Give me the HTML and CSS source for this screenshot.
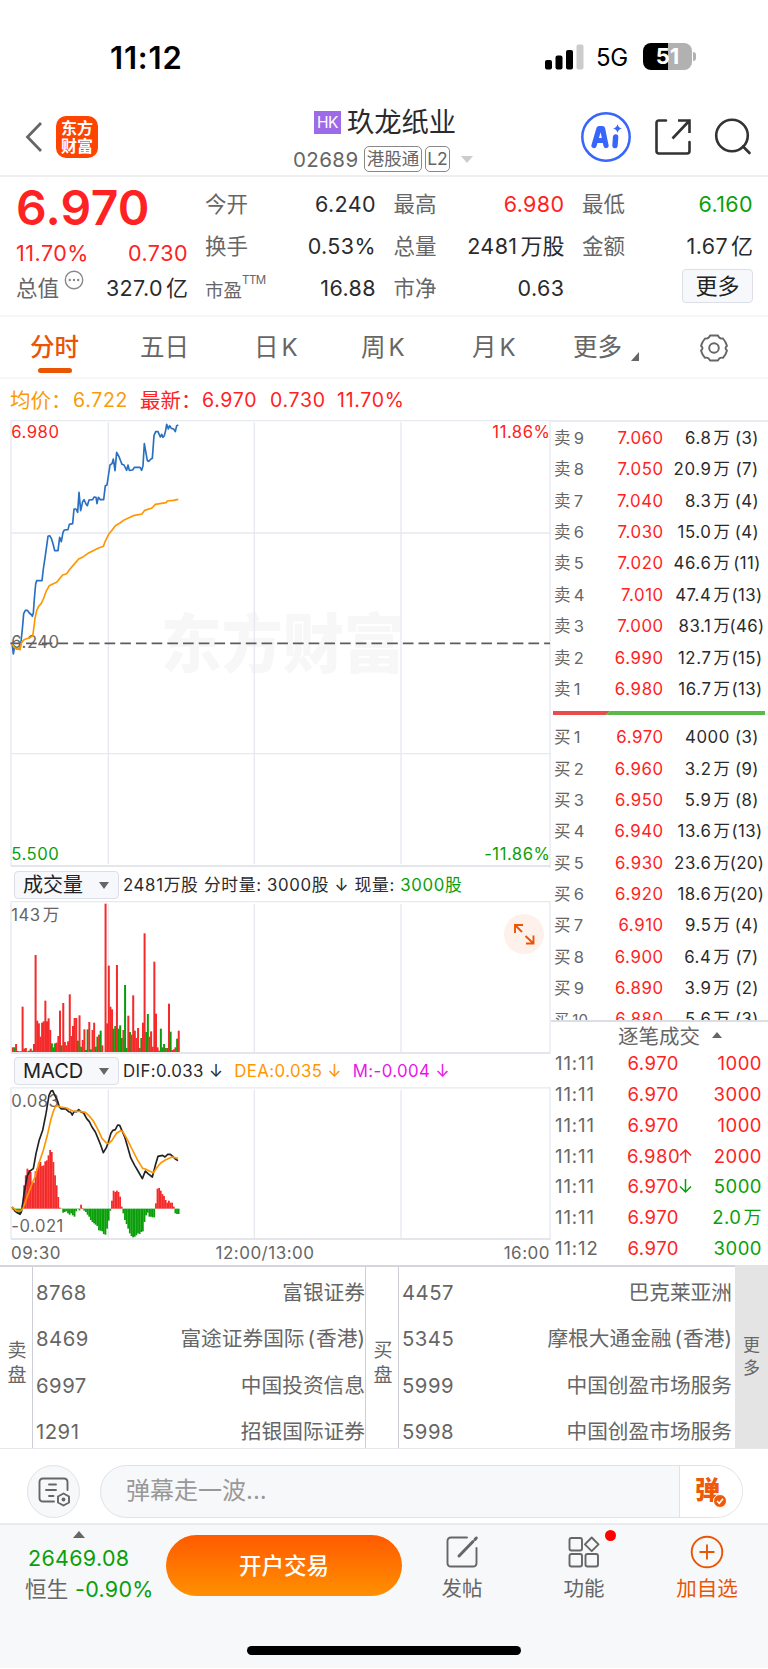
FILE: index.html
```html
<!DOCTYPE html>
<html lang="zh-CN">
<head>
<meta charset="utf-8">
<title>玖龙纸业 02689</title>
<link rel="stylesheet" href="styles.css">
</head>
<body>
<div class="phone">
  <div class="status">
    <span class="clock">11:12</span>
    <svg class="signal" width="39" height="26" viewBox="0 0 39 26"><rect x="0" y="16" width="7" height="9.500" rx="2"/><rect x="10.500" y="11.500" width="7" height="14" rx="2"/><rect x="21" y="6" width="7" height="19.500" rx="2"/><rect x="31.500" y="0.500" width="7" height="25" rx="2" fill="#ccc"/></svg>
    <span class="net">5G</span>
    <span class="battery">51</span><i class="battery-cap"></i>
  </div>

  <header class="nav">
    <svg class="back" width="20" height="32" viewBox="0 0 20 32"><path d="M17 2 L3.500 16 L17 30" fill="none" stroke="#666" stroke-width="2.800"/></svg>
    <div class="logo"><span>东方</span><span>财富</span></div>
    <div class="title">
      <div class="name"><span class="hk">HK</span>玖龙纸业</div>
      <div class="sub"><span class="code">02689</span><span class="pill">港股通</span><span class="pill l2">L2</span><i class="tri-down light"></i></div>
    </div>
    <svg class="ai" width="50" height="50" viewBox="0 0 50 50"><circle cx="25" cy="25" r="23.700" fill="none" stroke="#3866fa" stroke-width="2.500"/><path d="M13 33.500 L18 16.500 L21.500 16.500 L25 33.500 M15 28.500 L24 28.500" fill="none" stroke="#3866fa" stroke-width="5.200" stroke-linejoin="round" stroke-linecap="round"/><path d="M34.600 25 L34 33.500" stroke="#3866fa" stroke-width="5.400" stroke-linecap="round"/><path d="M36.500 12 Q37.200 15.800 41 16.500 Q37.200 17.200 36.500 21 Q35.800 17.200 32 16.500 Q35.800 15.800 36.500 12Z" fill="#3866fa"/></svg>
    <svg class="share" width="38" height="38" viewBox="0 0 38 38" fill="none" stroke="#333" stroke-width="2.600"><path d="M12 2.500 H5 Q2.500 2.500 2.500 5 V33 Q2.500 35.500 5 35.500 H33 Q35.500 35.500 35.500 33 V24" stroke-linecap="round"/><path d="M24 2.500 H35.500 V15 M35.500 2.500 L18.500 20.500"/></svg>
    <svg class="search" width="38" height="38" viewBox="0 0 38 38" fill="none" stroke="#333" stroke-width="2.600" stroke-linecap="round"><circle cx="18" cy="17.500" r="15.800"/><path d="M29 28.500 L35.500 35"/></svg>
  </header>

  <section class="quote">
    <div class="price">
      <div class="last">6.970</div>
      <div class="chg"><span>11.70%</span><span>0.730</span></div>
      <div class="cap"><span class="lbl">总值</span><svg width="20" height="20" viewBox="0 0 20 20"><circle cx="10" cy="10" r="8.700" fill="none" stroke="#888" stroke-width="1.400"/><g fill="#888"><circle cx="5.800" cy="10" r="1.200"/><circle cx="10" cy="10" r="1.200"/><circle cx="14.200" cy="10" r="1.200"/></g></svg><b>327.0<em>亿</em></b></div>
    </div>
    <div class="stats">
      <div><span>今开</span><b>6.240</b></div><div><span>最高</span><b class="up">6.980</b></div><div><span>最低</span><b class="dn">6.160</b></div>
      <div><span>换手</span><b>0.53%</b></div><div><span>总量</span><b>2481<em>万股</em></b></div><div><span>金额</span><b>1.67<em>亿</em></b></div>
      <div><span class="pe">市盈<sup>TTM</sup></span><b>16.88</b></div><div><span>市净</span><b>0.63</b></div><div><span></span><button class="more">更多</button></div>
    </div>
  </section>

  <nav class="tabs">
    <span class="on">分时</span><span class="t2">五日</span><span class="t3">日<i>K</i></span><span class="t4">周<i>K</i></span><span class="t5">月<i>K</i></span><span class="t6">更多</span>
    <svg class="corner" width="8" height="9" viewBox="0 0 8 9"><path d="M8 0 V9 H0Z" fill="#666"/></svg>
    <svg class="gear" width="30" height="30" viewBox="0 0 30 30" fill="none" stroke="#666" stroke-width="1.900" stroke-linejoin="round"><path d="M11 2.500 H19 Q20.200 6.200 24 5.500 Q27 9 28 13 Q25 15 28 17.500 Q27 21.500 24 24.800 Q20.500 24 19 27.500 H11 Q9.500 24 6 24.800 Q3 21.500 2 17.500 Q5 15 2 13 Q3 9 6 5.500 Q9.800 6.200 11 2.500Z"/><circle cx="15" cy="15" r="4.800"/></svg>
  </nav>

  <div class="info"><span class="avg">均价：</span><span class="avg v1">6.722</span><span class="v2">最新：</span><span class="v3">6.970</span><span class="v4">0.730</span><span class="v5">11.70%</span></div>

  <main class="board">
    <div class="charts">
      <svg class="c-price" width="551" height="448" viewBox="0 33 1653 1344">
        <text class="mark" x="482" y="775" textLength="732" lengthAdjust="spacingAndGlyphs">东方财富</text>
        <g class="grid"><path d="M33 34.500H1653M33 372H1653M33 1034H1653M33 34V1371M325 40V1366M763 40V1366M1203 40V1366M1650 34V1377"/><path class="edge" d="M33 1371H1650"/></g>
        <path class="base" d="M31 703H1650"/>
        <text x="34" y="717" class="g">6.240</text>
        <polyline class="blue" points="36,700 40,735 44,712 50,720 60,720 64,690 68,650 71,614 76,604 82,604 88,612 95,618 97,622 100,612 103,570 107,525 110,515 126,515 130,480 136,440 144,382 149,380 154,388 160,408 164,425 174,425 179,385 184,398 189,370 193,363 204,362 208,346 218,344 222,300 228,300 233,310 237,250 242,305 248,278 252,272 258,285 262,290 267,273 278,272 282,264 288,265 291,284 295,265 301,272 311,272 316,230 321,228 330,168 336,164 340,150 345,185 350,130 357,143 362,156 366,166 372,168 380,184 384,168 388,184 398,183 403,175 420,175 425,184 429,170 433,104 442,155 446,157 453,150 457,148 462,80 467,68 474,68 481,84 485,76 489,85 493,80 497,64 500,46 505,60 509,50 514,58 521,60 526,68 530,50 535,48"/>
        <polyline class="orange" points="36,706 46,718 60,722 64,702 72,692 84,688 98,682 101,660 105,628 110,605 116,592 124,583 130,570 138,548 148,530 160,524 170,520 178,510 188,498 200,494 210,480 222,466 236,450 250,443 264,433 278,426 294,418 310,412 316,396 326,376 336,364 346,350 360,342 374,332 400,320 426,315 434,304 456,297 466,286 498,281 502,276 520,274 535,271"/>
        <text x="34" y="88" class="r">6.980</text><text x="1651" y="88" class="r end">11.86%</text>
        <text x="34" y="1353" class="n">5.500</text><text x="1651" y="1353" class="n end">-11.86%</text>
      </svg>
      <div class="bar">
        <span class="pick">成交量<i class="tri-down"></i></span>
        <span class="sum">2481<em>万股</em> <em>分时量</em>: 3000<em>股</em> ↓ <em>现量</em>: <u>3000<em>股</em></u></span>
      </div>
      <div class="volwrap">
        <svg width="551" height="153" viewBox="0 123 1653 459">
          <g class="grid"><path d="M33 125H1650M33 125V580M325 131V576M763 131V576M1203 131V576M1650 123V582"/><path class="edge" d="M33 579H1650"/></g>
          <g id="vol"></g>
          <text x="34" y="182" class="g">143<tspan dx="6">万</tspan></text>
        </svg>
        <svg class="expand" width="40" height="40" viewBox="0 0 40 40"><circle cx="20" cy="20" r="20" fill="#fef1eb"/><g fill="none" stroke="#ea5504" stroke-width="1.900"><path d="M11 19V11H19M11 11L18 18M22 29.500H29.500V21.500M29.500 29.500L21.500 22"/></g></svg>
      </div>
      <div class="bar m">
        <span class="pick">MACD<i class="tri-down"></i></span>
        <span>DIF:0.033 ↓</span><span class="dea">DEA:0.035 ↓</span><span class="mm">M:-0.004 ↓</span>
      </div>
      <svg width="551" height="153" viewBox="0 110 1653 459">
        <g class="grid"><path d="M33 112.500H1650M33 112V566M325 118V564M763 118V564M1203 118V564M1650 110V569"/><path class="edge" d="M33 566H1650"/></g>
        <g id="macd"></g>
        <text x="34" y="169" class="g">0.083</text><text x="34" y="546" class="g">-0.021</text>
        <polyline class="black" points="36,470 45,482 53,488 60,492 65,482 72,430 82,375 90,362 100,355 108,310 118,268 128,240 138,190 147,135 153,122 158,121 163,132 172,150 178,170 184,176 196,175 206,184 212,186 217,194 222,184 230,184 236,178 242,184 251,188 260,205 268,214 276,230 286,245 294,264 302,284 310,307 319,292 325,275 333,248 339,240 346,238 353,224 359,225 367,243 375,262 383,290 392,322 404,345 414,362 427,385 436,362 444,370 457,380 466,345 474,318 488,315 495,320 503,312 511,312 518,318 526,326 534,331"/>
        <polyline class="orange" points="36,470 50,482 62,482 70,472 82,438 96,400 105,380 118,335 130,300 142,255 152,210 160,183 166,169 172,166 182,170 200,173 218,182 240,183 256,186 268,197 280,212 294,238 306,264 318,277 326,280 336,270 350,248 362,241 368,243 380,264 396,296 412,328 428,354 436,356 448,362 460,367 472,350 482,338 496,329 516,320 534,324"/>
      </svg>
      <div class="axis"><span>09:30</span><span>12:00/13:00</span><span>16:00</span></div>
    </div>

    <aside class="side">
      <div class="book">
        <div class="lv"><s>卖<i>9</i></s><b>7.060</b><q>6.8<em>万</em></q><u>(3)</u></div>
        <div class="lv"><s>卖<i>8</i></s><b>7.050</b><q>20.9<em>万</em></q><u>(7)</u></div>
        <div class="lv"><s>卖<i>7</i></s><b>7.040</b><q>8.3<em>万</em></q><u>(4)</u></div>
        <div class="lv"><s>卖<i>6</i></s><b>7.030</b><q>15.0<em>万</em></q><u>(4)</u></div>
        <div class="lv"><s>卖<i>5</i></s><b>7.020</b><q>46.6<em>万</em></q><u>(11)</u></div>
        <div class="lv"><s>卖<i>4</i></s><b>7.010</b><q>47.4<em>万</em></q><u>(13)</u></div>
        <div class="lv"><s>卖<i>3</i></s><b>7.000</b><q>83.1<em>万</em></q><u>(46)</u></div>
        <div class="lv"><s>卖<i>2</i></s><b>6.990</b><q>12.7<em>万</em></q><u>(15)</u></div>
        <div class="lv"><s>卖<i>1</i></s><b>6.980</b><q>16.7<em>万</em></q><u>(13)</u></div>
        <svg class="ratio" width="212" height="4" viewBox="0 0 212 4"><path d="M0 0H57L53 4H0Z" fill="#ec4b4b"/><path d="M57 0H212V4H53Z" fill="#5bb947"/></svg>
        <div class="lv"><s>买<i>1</i></s><b>6.970</b><q>4000</q><u>(3)</u></div>
        <div class="lv"><s>买<i>2</i></s><b>6.960</b><q>3.2<em>万</em></q><u>(9)</u></div>
        <div class="lv"><s>买<i>3</i></s><b>6.950</b><q>5.9<em>万</em></q><u>(8)</u></div>
        <div class="lv"><s>买<i>4</i></s><b>6.940</b><q>13.6<em>万</em></q><u>(13)</u></div>
        <div class="lv"><s>买<i>5</i></s><b>6.930</b><q>23.6<em>万</em></q><u>(20)</u></div>
        <div class="lv"><s>买<i>6</i></s><b>6.920</b><q>18.6<em>万</em></q><u>(20)</u></div>
        <div class="lv"><s>买<i>7</i></s><b>6.910</b><q>9.5<em>万</em></q><u>(4)</u></div>
        <div class="lv"><s>买<i>8</i></s><b>6.900</b><q>6.4<em>万</em></q><u>(7)</u></div>
        <div class="lv"><s>买<i>9</i></s><b>6.890</b><q>3.9<em>万</em></q><u>(2)</u></div>
        <div class="lv ten"><s>买<i>10</i></s><b>6.880</b><q>5.6<em>万</em></q><u>(3)</u></div>
      </div>
      <div class="ticks">
        <div class="th">逐笔成交<i class="tri-up"></i></div>
        <div class="tk"><s>11:11</s><b>6.970</b><q class="up">1000</q></div>
        <div class="tk"><s>11:11</s><b>6.970</b><q class="up">3000</q></div>
        <div class="tk"><s>11:11</s><b>6.970</b><q class="up">1000</q></div>
        <div class="tk"><s>11:11</s><b>6.980</b><svg width="13" height="16" viewBox="0 0 13 16"><path d="M6.500 15V2M1 7.500L6.500 2L12 7.500" fill="none" stroke="#f22" stroke-width="1.500"/></svg><q class="up">2000</q></div>
        <div class="tk"><s>11:11</s><b>6.970</b><svg width="13" height="16" viewBox="0 0 13 16"><path d="M6.500 1V14M1 8.500L6.500 14L12 8.500" fill="none" stroke="#0a9f0a" stroke-width="1.500"/></svg><q class="dn">5000</q></div>
        <div class="tk"><s>11:11</s><b>6.970</b><q class="dn">2.0<em>万</em></q></div>
        <div class="tk"><s>11:12</s><b>6.970</b><q class="dn">3000</q></div>
      </div>
    </aside>
  </main>

  <section class="brokers">
    <div class="side-l">卖<br>盘</div>
    <ul><li><span>8768</span><span>富银证券</span></li><li><span>8469</span><span>富途证券国际<i>(</i>香港<i>)</i></span></li><li><span>6997</span><span>中国投资信息</span></li><li><span>1291</span><span>招银国际证券</span></li></ul>
    <div class="side-l">买<br>盘</div>
    <ul class="buy"><li><span>4457</span><span>巴克莱亚洲</span></li><li><span>5345</span><span>摩根大通金融<i>(</i>香港<i>)</i></span></li><li><span>5999</span><span>中国创盈市场服务</span></li><li><span>5998</span><span>中国创盈市场服务</span></li></ul>
    <div class="more-l">更<br>多</div>
  </section>

  <section class="danmu">
    <div class="round"><svg width="32" height="30" viewBox="0 0 32 30" fill="none" stroke="#666" stroke-width="1.900" stroke-linecap="round" stroke-linejoin="round"><path d="M29.500 13V5Q29.500 1.500 26 1.500H5Q1.500 1.500 1.500 5V21Q1.500 24.500 5 24.500H16M11 7.500H18M8 13H18M11 19H15.500"/><path d="M25.500 16.500L31 19.500V25.500L25.500 28.500L20 25.500V19.500Z"/><circle cx="25.500" cy="22.500" r="1" fill="#666"/></svg></div>
    <div class="field"><span>弹幕走一波...</span><div class="dan">弹<svg width="14" height="14" viewBox="0 0 14 14"><circle cx="7" cy="7" r="6.500" fill="#ee5a0a" stroke="#fff"/><path d="M4 7L6.300 9.300L10 4.800" fill="none" stroke="#fff" stroke-width="1.500"/></svg></div></div>
  </section>

  <footer class="foot">
    <div class="index"><i class="tri-up"></i><div class="dn num">26469.08</div><div class="hs">恒生 <b class="dn">-0.90%</b></div></div>
    <button class="open">开户交易</button>
    <div class="act a1"><svg width="34" height="34" viewBox="0 0 34 34" fill="none" stroke="#666" stroke-width="1.900" stroke-linecap="round"><path d="M22 2.500H6Q2.500 2.500 2.500 6V28Q2.500 31.500 6 31.500H28Q31.500 31.500 31.500 28V13"/><path d="M14 21L28 6.500" stroke-width="3"/><path d="M30 4.500L31.300 3" stroke-width="3"/></svg><span>发帖</span></div>
    <div class="act a2"><svg width="34" height="34" viewBox="0 0 34 34" fill="none" stroke="#666" stroke-width="1.900" stroke-linejoin="round"><rect x="2.500" y="3" width="12.500" height="12.500" rx="2"/><rect x="2.500" y="19" width="12.500" height="12.500" rx="2"/><rect x="18.500" y="19" width="12.500" height="12.500" rx="2"/><path d="M24.700 2.500L31.500 9.300L24.700 16.100L17.900 9.300Z"/></svg><span>功能</span><i class="dot"></i></div>
    <div class="act a3"><svg width="34" height="34" viewBox="0 0 34 34" fill="none" stroke="#ea5504" stroke-width="1.900"><circle cx="17" cy="17" r="15.300"/><path d="M17 9.500V24.500M9.500 17H24.500"/></svg><span>加自选</span></div>
    <i class="home"></i>
  </footer>
</div>
<script src="script.js"></script>
</body>
</html>
```
FILE: styles.css
```css
* { box-sizing: border-box; }
body { margin: 0; background: #fff; color: #2a2b2e; font-family: Inter, "Noto Sans CJK SC", sans-serif; }
i, em, s, u, q { font-style: normal; text-decoration: none; }
q::before, q::after { content: none; }
b { font-weight: 400; }
button { font-family: inherit; padding: 0; }
.phone { width: 768px; height: 1669px; overflow: hidden; }
.up { color: #f22; }
.dn { color: #0a9f0a; }

.tri-down { display: inline-block; border: 5px solid transparent; border-top: 7px solid #666; border-bottom: 0; }
.tri-down.light { border-width: 7px 6px 0; border-top-color: #ccc; }
.tri-up { display: inline-block; border: 5px solid transparent; border-bottom: 6px solid #666; border-top: 0; }

.status { height: 100px; padding: 43px 0 0 110px; display: flex; color: #000; }
.clock { width: 435px; font-size: 31px; line-height: 29px; font-weight: 600; letter-spacing: .8px; }
.signal { margin-top: 1px; }
.net { width: 47px; margin-left: 12px; font-size: 24px; line-height: 30px; letter-spacing: -.3px; }
.battery { width: 49px; height: 27px; border-radius: 8px; background: linear-gradient(90deg, #000 51%, #b1b1b1 51%); color: #fff; font-weight: 700; font-size: 22px; line-height: 27px; text-align: center; }
.battery-cap { width: 3px; height: 9px; margin: 9px 0 0 1px; background: #b1b1b1; border-radius: 0 3px 3px 0; }

.nav { height: 77px; display: flex; border-bottom: 2px solid #eee; padding-left: 24px; }
.back { margin-top: 21px; }
.logo { width: 42px; height: 42px; margin: 16px 0 0 12px; padding-top: 3px; border-radius: 10px; background: #ff4400; color: #fff; font-weight: 700; font-size: 16px; line-height: 18px; text-align: center; display: flex; flex-direction: column; }
.title { width: 282px; margin-left: 148px; padding-top: 6px; }
.name { display: flex; align-items: center; justify-content: center; width: 306px; margin-left: -14px; height: 33px; font-size: 27.300px; line-height: 33px; }
.hk { width: 27px; height: 23px; margin-right: 6px; background: #9e6be8; color: #fff; font-size: 15.500px; line-height: 23px; text-align: center; letter-spacing: -.5px; }
.sub { display: flex; align-items: center; height: 26px; margin: 7px 0 0 46px; color: #666; }
.code { width: 71px; padding-left: 1px; font-size: 20.500px; letter-spacing: .4px; }
.pill { height: 26px; width: 58px; border: 1.500px solid #888; border-radius: 5px; font-size: 17.500px; line-height: 23px; text-align: center; margin-left: 1px; }
.pill.l2 { width: 25px; margin: 0 11px 0 3px; }
.ai { margin: 12px 0 0 53px; }
.share { margin: 18px 0 0 23px; }
.search { margin: 18px 0 0 22px; }

.quote { height: 140px; border-bottom: 2px solid #f7f7f7; display: flex; padding: 6px 15px 0 16px; }
.price { width: 172px; margin-right: 17px; }
.last { font-size: 48px; line-height: 49px; font-weight: 600; color: #f22; letter-spacing: .3px; }
.chg { display: flex; justify-content: space-between; height: 30px; margin-top: 6px; font-size: 21.500px; line-height: 30px; color: #f22; letter-spacing: .5px; }
.cap { display: flex; height: 30px; margin-top: 5px; line-height: 30px; font-size: 22px; }
.cap svg { margin: -3px 0 0 5px; }
.cap b { margin-left: auto; font-size: 21.500px; letter-spacing: .4px; }
.cap em { font-size: 22px; margin-left: 3px; letter-spacing: 0; }
.lbl { color: #666; font-size: 21.500px; }
.stats { flex: 1; display: grid; grid-template-columns: 171px 171px 171px; column-gap: 17.500px; grid-auto-rows: 42px; }
.stats div { display: flex; justify-content: space-between; line-height: 43px; font-size: 21.500px; }
.stats b { letter-spacing: .4px; }
.stats span { color: #666; font-size: 21.500px; }
.stats .pe { font-size: 18.500px; display: flex; line-height: 47px; }
.pe sup { font-size: 11.500px; line-height: 26px; letter-spacing: -.5px; }
.stats em { font-size: 22px; margin-left: 3px; letter-spacing: 0; }
.more { width: 71px; height: 34px; margin-top: 2px; border: 1.500px solid #dcdfe8; border-radius: 4px; background: #f7f8fb; font-size: 22px; line-height: 30px; color: #222; }

.tabs { height: 62px; border-bottom: 2px solid #f7f7f7; display: flex; line-height: 61px; font-size: 24.500px; color: #666; padding-left: 30px; }
.tabs span { width: 50px; margin-right: 60px; white-space: nowrap; }
.tabs .on { color: #ea5504; font-weight: 500; position: relative; }
.on::after { content: ""; position: absolute; left: 8px; top: 51px; width: 34px; height: 5px; border-radius: 3px; background: #ea5504; }
.tabs i { margin-left: 3px; font-size: 24px; }
.tabs .t2 { margin-right: 64px; }
.tabs .t3 { margin-right: 57px; }
.tabs .t4 { margin-right: 61px; }
.tabs .t5 { margin-right: 51px; }
.tabs .t6 { margin-right: 8px; }
.corner { margin-top: 35px; }
.gear { margin: 16px 0 0 60px; }

.info { height: 41px; display: flex; padding: 0 0 0 10px; line-height: 43px; font-size: 19.500px; letter-spacing: .7px; color: #f22; white-space: nowrap; }
.avg { color: #fa9a0a; }
.info .avg:first-child, .v2 { width: 62px; font-size: 20.500px; letter-spacing: 0; }
.info .avg:first-child { width: 63px; }
.v1 { width: 67px; }
.v3 { width: 68px; }
.v4 { width: 67px; }

.board { display: flex; height: 845px; }
.charts { width: 551px; display: flex; flex-direction: column; }
.charts svg { display: block; flex: none; }
.charts text { font-size: 50px; letter-spacing: 1.500px; }
.charts .mark { font-size: 190px; font-weight: 900; fill: #f7f7f7; letter-spacing: 0; }
.grid path { fill: none; stroke: #e6e9f0; stroke-width: 4; }
.grid .edge { stroke: #dcdee4; }
.base { stroke: #5c5c5c; stroke-width: 5; stroke-dasharray: 32 15.100; }
.charts polyline { fill: none; stroke-width: 5; stroke-linejoin: round; }
.blue { stroke: #2a70c2; }
.orange { stroke: #ff9600; }
.black { stroke: #222; }
.g { fill: #666; } .r { fill: #f22; } .n { fill: #0a9f0a; }
.end { text-anchor: end; }
.bar { height: 33px; flex: none; display: flex; padding: 2px 0 0 14px; font-size: 16.800px; line-height: 30px; letter-spacing: .4px; white-space: pre; }
.sum { letter-spacing: .65px; }
.bar u { color: #0a9f0a; }
.bar em { font-size: 16.800px; }
.pick { width: 105px; height: 28px; margin: 1px 4px 0 0; padding: 0 9px 0 8px; display: flex; justify-content: space-between; align-items: center; border: 1.500px solid #dcdfe8; border-radius: 4px; background: #f7f8fb; font-size: 20px; letter-spacing: 0; color: #222; }
.dea { color: #ff9600; margin-left: 11px; }
.mm { color: #e815e8; margin-left: 11px; }
.volwrap { position: relative; height: 153px; }
.expand { position: absolute; left: 504px; top: 13px; }
.axis { display: grid; grid-template-columns: 104px 300px 1fr; padding: 0 1px 0 11px; height: 25px; line-height: 26px; font-size: 17px; letter-spacing: .5px; color: #666; }
.axis span:nth-child(2) { text-align: center; }
.axis span:nth-child(3) { text-align: right; }

.side { width: 217px; }
.book { height: 602px; overflow: hidden; border-top: 2px solid #e9ebf0; border-bottom: 2px solid #dcdee4; padding-top: 1px; }
.lv { height: 31.370px; display: grid; grid-template-columns: 44px 65.800px 66.200px 34px; line-height: 31px; font-size: 16.800px; letter-spacing: .6px; padding-left: 3px; white-space: nowrap; }
.lv s { color: #666; font-size: 16.500px; letter-spacing: .2px; }
.lv s i { margin-left: 3px; }
.lv b { color: #f22; text-align: right; }
.lv q { text-align: right; }
.lv em { margin-left: 2px; font-size: 16.500px; letter-spacing: 0; }
.lv u { display: flex; justify-content: center; letter-spacing: .4px; }
.ten s { font-size: 15px; }
.ratio { display: block; margin: 6px 0 7px 2px; }
.th { height: 26px; display: flex; align-items: center; padding-left: 67px; font-size: 20.500px; color: #666; gap: 12px; }
.tk { display: flex; height: 30.750px; line-height: 30px; font-size: 18.500px; letter-spacing: .5px; padding: 0 6px 0 4px; align-items: center; }
.tk s { color: #666; width: 72px; letter-spacing: .9px; }
.tk b { color: #f22; width: 52px; text-align: right; white-space: nowrap; }
.tk q { margin-left: auto; }
.tk em { font-size: 18px; margin-left: 2px; }

.brokers { display: flex; height: 184px; border-top: 2px solid #d5d6dc; border-bottom: 1.500px solid #e6e7ea; color: #666; }
.side-l { width: 33px; display: flex; align-items: center; justify-content: center; font-size: 19px; line-height: 25px; padding: 11px 0 0 2px; border-right: 1.500px solid #cdcfd8; }
.brokers ul { margin: 0; padding: 3px 0 0 3px; width: 333px; list-style: none; border-right: 1.500px solid #cdcfd8; }
.brokers ul.buy { width: 336px; border: 0; padding-right: 3px; }
.brokers li { height: 46.300px; line-height: 45px; display: flex; justify-content: space-between; font-size: 20.700px; }
.brokers li span:first-child { font-size: 20.300px; letter-spacing: .5px; }
.brokers li i { margin: 0 1px 0 3px; }
.brokers li i:last-child { margin: 0; }
.more-l { width: 33px; margin-top: -2px; background: #e4e4e4; display: flex; align-items: center; justify-content: center; font-size: 17px; line-height: 23px; }

.danmu { height: 74px; display: flex; padding: 16px 0 0 27px; }
.round { width: 53px; height: 53px; border: 1.500px solid #e0e2e8; border-radius: 50%; background: #f7f8fa; display: flex; align-items: center; justify-content: center; margin-right: 20px; }
.field { width: 643px; height: 53px; border: 1.500px solid #e0e2e8; border-radius: 27px; background: #f7f8fa; overflow: hidden; display: flex; justify-content: space-between; padding-left: 25px; font-size: 24px; line-height: 49px; color: #999; }
.dan { width: 63px; border-left: 1.500px solid #e0e2e8; background: #fff; color: #ee5a0a; font-weight: 900; font-size: 25px; padding-left: 15px; position: relative; }
.dan svg { position: absolute; left: 33px; top: 28px; }

.foot { height: 145px; border-top: 2px solid #e9eaee; background: #f7f8fa; position: relative; display: flex; }
.index { width: 166px; padding: 6px 0 0 25px; font-size: 21.500px; letter-spacing: .3px; display: flex; flex-direction: column; }
.index .tri-up { align-self: flex-start; margin-left: 48px; border-width: 0 6px 7px; }
.num { line-height: 26px; padding: 7px 0 0 3px; }
.hs { line-height: 32px; margin-top: 2px; color: #666; white-space: nowrap; }
.open { width: 236px; height: 61px; margin-top: 10px; padding-bottom: 4px; border: 0; border-radius: 31px; background: linear-gradient(#ff5a00, #ff9000); color: #fff; font-size: 22.500px; font-weight: 500; }
.act { width: 84px; padding-top: 10px; display: flex; flex-direction: column; align-items: center; font-size: 20.500px; color: #666; position: relative; }
.act span { line-height: 30px; margin-top: 5px; }
.a1 { margin-left: 18px; }
.a2 { margin-left: 38px; }
.a3 { margin-left: 39px; color: #ea5504; }
.dot { position: absolute; left: 63px; top: 5px; width: 11px; height: 11px; border-radius: 50%; background: #f00; }
.home { position: absolute; left: 247px; top: 121px; width: 274px; height: 9px; border-radius: 5px; background: #000; }
```
FILE: script.js
```js
// Per-minute series; a negative volume marks a falling minute.
const volume = [14,-14,24,-3,-2,-2,136,10,12,2,-4,10,-4,24,291,94,86,46,88,92,154,92,101,66,-26,-14,-26,28,48,124,-20,147,30,20,32,173,48,78,102,102,-34,110,-16,36,68,-6,-68,90,-8,66,88,-16,-46,52,-64,20,0,445,86,259,136,128,-70,-78,261,-70,-80,-42,66,-201,-12,109,-60,52,170,64,42,72,12,-42,88,356,-60,-114,46,62,16,271,115,14,4,-70,-14,-24,12,-12,145,-61,6,8,14,-40,64];
const macd = [-2,-4,-8,-12,-15,-14,10,70,100,120,116,110,80,78,112,120,138,140,128,130,142,145,160,176,170,140,100,70,35,3,-1,-12,-10,-8,-14,-18,-14,-20,-24,-8,-1,-5,12,2,-6,-10,-18,-24,-34,-40,-44,-48,-52,-65,-66,-68,-76,-78,-60,-36,-6,24,54,50,54,50,36,6,-14,-34,-46,-60,-74,-82,-86,-84,-80,-74,-76,-70,-68,-40,-20,-12,-24,-24,-26,-26,16,60,62,54,44,38,26,18,24,18,18,6,-14,-16,-16];
const NS = "http://www.w3.org/2000/svg";

function draw(id, data, bar) {
  const group = document.getElementById(id);
  data.forEach((v, i) => {
    const r = document.createElementNS(NS, "rect");
    const b = bar(v);
    r.setAttribute("x", 35.5 + i * 4.88);
    r.setAttribute("y", b.y);
    r.setAttribute("width", b.w);
    r.setAttribute("height", Math.abs(v));
    r.setAttribute("fill", v < 0 ? "#0a9f0a" : "#f52a2a");
    group.appendChild(r);
  });
}
draw("vol", volume, v => ({ y: 576 - Math.abs(v), w: 6 }));
draw("macd", macd, v => ({ y: v > 0 ? 475 - v : 475, w: 5.4 }));
```
